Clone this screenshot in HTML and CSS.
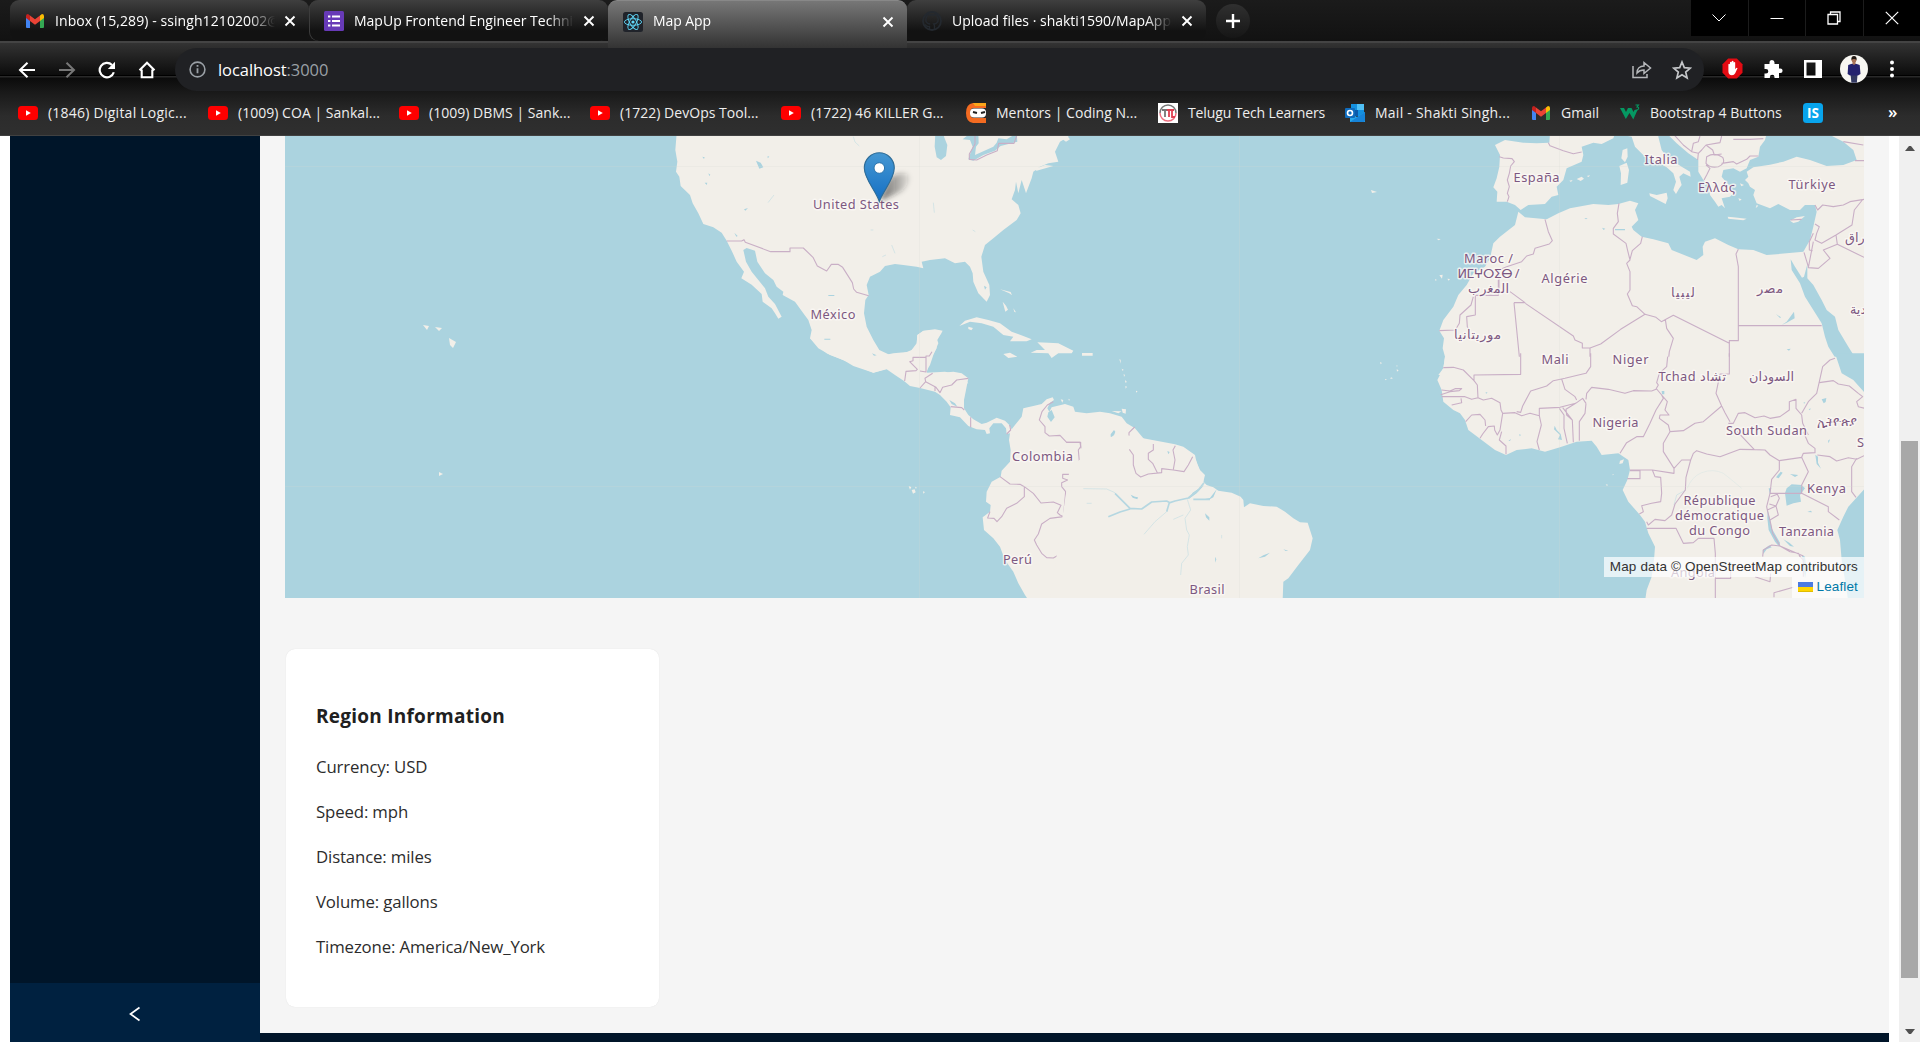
FILE: index.html
```html
<!DOCTYPE html>
<html lang="en">
<head>
<meta charset="utf-8">
<title>Map App</title>
<link rel="stylesheet" href="styles.css">
</head>
<body>
<svg class="defs" width="0" height="0">
  <symbol id="yt" viewBox="0 0 20 20"><rect y="3" width="20" height="14" rx="3.5" fill="#f00"/><path d="M8 7.2v5.6l4.8-2.8z" fill="#fff"/></symbol>
  <symbol id="gmail" viewBox="0 0 20 20"><path d="M1 5.5V16q0 1 1 1h3V9z" fill="#4285f4"/><path d="M19 5.5V16q0 1-1 1h-3V9z" fill="#34a853"/><path d="M15 4.5V10l4-3V5q0-2-2-2z" fill="#fbbc04"/><path d="M5 4.5V10L1 7V5q0-2 2-2z" fill="#c5221f"/><path d="M5 10V4.4l5 3.8 5-3.8V10l-5 3.8z" fill="#ea4335"/></symbol>
  <symbol id="close" viewBox="0 0 12 12"><path d="M1.500 1.500l9 9m0-9l-9 9" stroke="#fff" stroke-width="1.900"/></symbol>
</svg>

<header class="browser">
  <div class="tabstrip">
    <div class="tab">
      <svg class="fav" viewBox="0 0 20 20"><use href="#gmail"/></svg>
      <span class="tab-title wide">Inbox (15,289) - ssingh12102002@</span>
      <svg class="close"><use href="#close"/></svg>
    </div>
    <div class="tab tab-divided">
      <svg class="fav" viewBox="0 0 20 20"><rect width="20" height="20" rx="1.500" fill="#673ab7"/><path d="M4 5.500h2.400m1.600 0h8M4 10h2.400m1.600 0h8M4 14.500h2.400m1.600 0h8" stroke="#fff" stroke-width="2.200"/></svg>
      <span class="tab-title">MapUp Frontend Engineer Techni</span>
      <svg class="close"><use href="#close"/></svg>
    </div>
    <div class="tab tab-active">
      <svg class="fav" viewBox="0 0 20 20"><rect width="20" height="20" rx="2.500" fill="#20232a"/><g fill="none" stroke="#61dafb" stroke-width=".9"><ellipse cx="10" cy="10" rx="8.600" ry="3.300"/><ellipse cx="10" cy="10" rx="8.600" ry="3.300" transform="rotate(60 10 10)"/><ellipse cx="10" cy="10" rx="8.600" ry="3.300" transform="rotate(120 10 10)"/></g><circle cx="10" cy="10" r="1.600" fill="#61dafb"/></svg>
      <span class="tab-title tight">Map App</span>
      <svg class="close"><use href="#close"/></svg>
    </div>
    <div class="tab">
      <svg class="fav" viewBox="0 0 20 20"><path d="M7.500 18.500v-3c-3 .6-3.500-1.400-4.500-2M12.500 18.500V15c0-1-.3-1.500-.7-2 2.500-.3 4.400-1.400 4.400-4.500 0-1.200-.4-2.200-1.200-3 .1-.6.100-1.500-.2-2.500-1 0-2 .7-2.600 1.200a9 9 0 0 0-4.400 0C7.200 3.700 6.200 3 5.200 3c-.3 1-.3 1.900-.2 2.500-.8.8-1.200 1.800-1.200 3 0 3.100 1.900 4.200 4.400 4.500" fill="none" stroke="#24292f" stroke-width="1.400"/><circle cx="10" cy="10" r="9" fill="none" stroke="#24292f" stroke-width="1.800"/></svg>
      <span class="tab-title">Upload files · shakti1590/MapApp</span>
      <svg class="close"><use href="#close"/></svg>
    </div>
    <div class="newtab"><svg width="16" height="16"><path d="M8 1v14M1 8h14" stroke="#fff" stroke-width="2.400"/></svg></div>
    <div class="winbtns">
      <div><svg width="16" height="16"><path d="M1.500 4.500l6.500 6.500 6.500-6.500" fill="none" stroke="#fff"/></svg></div>
      <div><svg width="14" height="14"><path d="M.5 7.500h13" stroke="#fff"/></svg></div>
      <div><svg width="14" height="14"><path d="M1 3.500h9.500v9.500H1zM3.500 3V1H13v9.500h-2" fill="none" stroke="#fff" stroke-width="1.300"/></svg></div>
      <div><svg width="14" height="14"><path d="M.8.8l12.400 12.400m0-12.400L.8 13.200" stroke="#fff" stroke-width="1.200"/></svg></div>
    </div>
  </div>

  <div class="toolbar">
    <div class="nav">
      <svg viewBox="0 0 18 18"><path d="M17 9H2m7.500-7.300L2 9l7.500 7.300" fill="none" stroke="#fff" stroke-width="2"/></svg>
      <svg viewBox="0 0 18 18"><path d="M1 9h15M8.500 1.700L16 9l-7.500 7.300" fill="none" stroke="#777" stroke-width="2"/></svg>
      <svg viewBox="0 0 18 18"><path d="M15.800 11.200A7.200 7.200 0 1 1 14 4" fill="none" stroke="#fff" stroke-width="2.200"/><path d="M17 .8V8H9.800z" fill="#fff"/></svg>
      <svg viewBox="0 0 18 18"><path d="M3.700 8.500v7.700h10.600V8.500M1.500 9.300L9 1.800l7.500 7.500" fill="none" stroke="#fff" stroke-width="2.100"/></svg>
    </div>
    <div class="omnibox">
      <svg width="17" height="17" viewBox="0 0 17 17"><circle cx="8.500" cy="8.500" r="7.400" fill="none" stroke="#9aa0a6" stroke-width="1.600"/><path d="M8.500 7.300v5M8.500 4v1.800" stroke="#9aa0a6" stroke-width="1.800"/></svg>
      <span class="url"><b>localhost</b>:3000</span>
      <svg class="share" width="20" height="20" viewBox="0 0 20 20" fill="none" stroke="#b6b8bb" stroke-width="1.500"><path d="M1 6v11.500h14V14M5 13c0-4.500 3-7 7-7V2.500L18.500 8 12 13.500V10c-3 0-5.200.8-7 3z"/></svg>
      <svg width="20" height="20" viewBox="0 0 20 20"><path d="M10 2l2.300 5.600 6 .5-4.600 3.900 1.400 5.900-5.100-3.200-5.100 3.200L6.300 12 1.700 8.100l6-.5z" fill="none" stroke="#c4c6c9" stroke-width="1.700"/></svg>
    </div>
    <div class="ext">
      <svg width="21" height="21" viewBox="0 0 21 21"><path d="M6.200.5h8.600l5.700 5.700v8.600l-5.700 5.700H6.200L.5 14.800V6.200z" fill="#e30b13"/><path d="M6.400 10V6.200q.9-1 1.600 0V4.300q.9-1 1.700 0v-1q.9-1 1.800 0v1.200q.8-1 1.700 0v6.700l1-1.200q1.200-.6 1.300.3l-2.300 5q-1 2-3.200 2-3.600 0-3.600-4z" fill="#fff"/></svg>
      <svg width="20" height="20" viewBox="0 0 20 20"><path d="M1.500 5h5V3.500a2.500 2.500 0 0 1 5 0V5H16v4.500h1.300a2.300 2.300 0 0 1 0 4.600H16V19h-4.500v-1a2.300 2.300 0 0 0-4.600 0v1H1.500v-4.500H3a2.300 2.300 0 0 0 0-4.600H1.500z" fill="#fff"/></svg>
      <svg width="18" height="18" viewBox="0 0 18 18"><path fill-rule="evenodd" d="M0 0h18v18H0zM2.500 2.500v13H11.500v-13z" fill="#fff"/></svg>
      <svg width="28" height="28" viewBox="0 0 28 28"><circle cx="14" cy="14" r="14" fill="#f8f7f2"/><path d="M10.500 19h7l-.6 8.700h-5.500z" fill="#343a62"/><path d="M8.200 10q5.500-3 11.500 0l.8 9-2.500 1.500H10L7.600 19z" fill="#25236f"/><path d="M12.500 6h3v3l-1.500 1-1.500-1z" fill="#a97458"/><circle cx="14" cy="5.200" r="2.400" fill="#a97458"/><path d="M11.300 5q-.2-4 2.700-4t2.700 4q-2.700-2-5.400 0z" fill="#211913"/></svg>
      <svg width="6" height="18" viewBox="0 0 6 18" fill="#fff"><circle cx="3" cy="2.500" r="2"/><circle cx="3" cy="9" r="2"/><circle cx="3" cy="15.500" r="2"/></svg>
    </div>
  </div>

  <nav class="bookmarks">
    <a class="wide"><svg><use href="#yt"/></svg>(1846) Digital Logic...</a>
    <a><svg><use href="#yt"/></svg>(1009) COA | Sankal...</a>
    <a><svg><use href="#yt"/></svg>(1009) DBMS | Sank...</a>
    <a><svg><use href="#yt"/></svg>(1722) DevOps Tool...</a>
    <a><svg><use href="#yt"/></svg>(1722) 46 KILLER G...</a>
    <a><svg viewBox="0 0 20 20"><path d="M7 0h13v5H8q-4 0-4 5t4 5h12v5H7q-7-1-7-10T7 0z" fill="#f36b21"/><path d="M7 0h13v3H9z" fill="#f9a51a"/><rect x="4" y="5.500" width="16" height="9" rx="4" fill="#fff"/><path d="M7 9l4 1m4 0l4-1" stroke="#222" stroke-width="2"/></svg>Mentors | Coding N...</a>
    <a class="tight"><svg viewBox="0 0 20 20"><path fill="#fff" d="M0 0h20v20H0z"/><path d="M2 10a8 8 0 0 1 16 0" fill="none" stroke="#777" stroke-width="1.500"/><path d="M2 10a8 8 0 0 0 16 0" fill="none" stroke="#ee7080" stroke-width="1.500"/><path d="M4 7h7M7 7v7" stroke="#777" stroke-width="1.800"/><path d="M9 7h7M11 7v7m3-7v7h3" fill="none" stroke="#e04052" stroke-width="1.800"/></svg>Telugu Tech Learners</a>
    <a class="wide"><svg viewBox="0 0 20 20"><path d="M6 1h13v12H6z" fill="#1490df"/><path d="M12 1h7v6h-7z" fill="#50c0f5"/><path d="M6 7h7v6H6z" fill="#0a5bab"/><path d="M5 10l7 4 8-5v10H5z" fill="#28a8ea"/><path d="M5 19l15-10v9l-1 1z" fill="#1683d8"/><rect y="5" width="10" height="10" rx="1" fill="#0f6cbd"/><circle cx="5" cy="10" r="2.500" fill="none" stroke="#fff" stroke-width="1.600"/></svg>Mail - Shakti Singh...</a>
    <a><svg><use href="#gmail"/></svg>Gmail</a>
    <a><svg viewBox="0 0 20 20"><path d="M0 5h4l2 4 2-4h3.500l2 4 1-2h3l-4.200 9.500L9.500 10l-3.700 6z" fill="#059862"/><path d="M15.500 2h3l-1.500 2q2 0 1.600 1.700T15.500 7" fill="none" stroke="#059862" stroke-width="1.100"/></svg>Bootstrap 4 Buttons</a>
    <a><svg viewBox="0 0 20 20"><rect width="20" height="20" rx="3.500" fill="#08a4ec"/><text x="10" y="15.200" text-anchor="middle" class="is">IS</text></svg></a>
    <span class="more">»</span>
  </nav>
</header>

<div class="viewport">
  <aside class="sider">
    <div class="trigger"><svg width="12" height="16" viewBox="0 0 12 16"><path d="M10.500 1.500L1.500 8l9 6.500" fill="none" stroke="#fff" stroke-width="1.700"/></svg></div>
  </aside>
  <main class="layout">
    <div class="content">
      <div class="map">
        <svg class="tiles" viewBox="285 136 1579 462">
          <!-- North America -->
          <g transform="translate(640 130) scale(.33333)">
            <path class="land" d="M110 10L106 60 112 95 108 125 118 140 122 168 150 195 158 220 175 250 190 282 220 292 245 308 260 332 275 362 290 395 312 425 304 445 335 464 365 492 368 515 395 535 405 550 415 566 425 560 405 522 385 500 375 475 355 450 335 425 318 395 310 360 320 354 345 362 352 395 375 430 400 450 410 470 430 485 428 495 465 515 490 550 505 570 515 600 510 625 535 655 570 675 610 690 640 708 700 728 740 716 775 725 805 760H985L960 735 915 725 860 728 870 690 890 655 888 630 905 608 890 600 850 603 832 615 830 640 815 660 795 668 750 675 718 660 700 630 680 590 672 550 676 510 686 495 680 465 690 440 720 425 735 408 765 402 790 405 830 410 850 415 845 395 870 390 915 385 945 400 975 395 990 410 998 430 1000 455 1015 490 1040 515 1050 495 1048 465 1030 425 1024 380 1035 345 1060 325 1090 300 1130 270 1142 250 1135 225 1115 208 1125 180 1128 155 1135 190 1145 150 1155 180 1158 190 1175 145 1180 125 1200 110 1225 100 1255 95 1245 65 1260 35 1285 20V10Z"/>
            <path class="land" d="M958 588L975 572 1010 562 1045 570 1080 580 1115 605 1150 618 1175 628 1160 634 1110 634 1120 620 1090 615 1060 590 1025 580 990 575ZM985 590l14 4-5 7-9-4zM1192 637L1225 638 1255 640 1300 662 1295 670 1255 670 1235 684 1225 670 1172 668 1190 660 1215 660ZM1090 672L1110 668 1132 680 1105 684ZM1088 515l10 12 6 12-8 6zM1120 535l8 12-5-1zM1080 478l32 8 4 10-8-6zM1260 22L1282 18 1290 28 1278 35ZM1182 118L1215 105 1240 108 1190 122Z"/>
            <path class="water" d="M886 10L884 50 890 82 903 90 918 78 922 45 912 20 915 10ZM968 28L990 10H1015L1016 40 1008 50 1005 75 1060 50 1070 38 1075 25 1100 28 1130 10 1132 35 1082 48 1065 62 1030 75 1000 92 985 88 998 50 990 30ZM348 92L362 98 370 112 358 116ZM187 80l7 2-2 5zM194 158h8l-2 7zM205 130l6 4-3 4zM283 308l10 10-4 2zM1032 467l8 5-5 7zM312 238l12-4-8 8zM565 495h18v3h-18zM555 627h15v3h-15zM383 78l5 2-5 5z"/>
            <path class="thinwater" d="M640 20L645 36 658 48M880 218L883 248M384 218L402 195M755 345L765 370M727 380L738 375M692 300h8M998 300l8 5"/>
            <path class="border" d="M260 333H305L312 329 316 337 392 365H450V354H490L519 382 532 408 560 423 574 403H594L608 412 637 458 641 477 650 487 686 497M1005 15V42L988 72V88L1010 90 1040 75 1072 62 1076 40H1122L1130 18"/>
          </g>
          <!-- Central America and the west of South America -->
          <g transform="translate(760 300) scale(.33333)">
            <path class="land" d="M300 100L150 115 200 160 340 218 380 208 405 225 432 243 450 258 480 264 525 275 540 285 560 305 572 322 570 345 600 352 625 378 650 388 675 390 680 402 690 400 688 385 700 370 725 370 738 385 740 402 750 400 747 420 752 450 750 485 725 512 722 530 695 545 680 575 678 605 692 615 690 635 668 652 672 690 700 715 720 740 735 780 760 815 775 850 795 885 805 900H1330V540L1308 480 1295 465 1270 450 1240 436 1165 432 1150 415 1125 385 1100 370 1085 350 1050 340 1020 335 980 340 945 335 940 320 915 312 875 322 868 335 862 325 870 308 882 300 878 292 860 298 845 312 820 318 790 325 785 350 765 375 755 388 748 375 735 362 710 353 680 368 665 372 640 358 625 345 612 325 612 300 618 270 625 235 605 220 580 215 530 220 505 222 498 215 510 195 520 165 535 130 532 120 548 92 525 88 490 92 472 105 470 135 450 155 400 160 375 165 350 150Z"/>
            <path class="land" d="M966 159H998V167H966ZM902 298l8 2-3 8zM925 296l5 3-3 3zM1085 326L1098 328 1097 341 1088 338ZM1055 333L1085 334 1075 340ZM1078 178l4 1v12zM1085 206l6 3-3 4zM1091 222l4 3-3 6zM1095 240l6 6-5 2zM1096 258l5 2-4 6zM1128 272l5 2-5 4zM446 558l8 3-4 8zM455 570l9-2 3 9-8 4zM465 560l5 2-2 5zM489 574l6 2-5 5z"/>
            <path class="water" d="M865 337L875 330 884 352 873 366 862 350ZM1052 403L1062 390 1066 395 1060 412 1052 410ZM568 300L585 310 592 320 575 312ZM1222 455l7-2-2 9zM1113 584L1125 590 1135 592 1132 598 1118 593ZM193 116h18v3h-18zM336 160l14 6-8 1zM1046 745l6 3-5 4z"/>
            <path class="border" d="M516 155L508 168H498V216L480 213M498 172H459V182L449 185 472 208 468 212 438 214 434 243M480 264L497 245 528 262 540 278 548 262 575 255 590 240 625 235M497 245L495 235 518 220M525 262V273M572 320L605 323 613 330M632 352V382M749 375L752 390 740 402M880 305L862 315 846 335 838 360 855 380V398L868 408 900 406 920 427H962V440L955 450 958 485 953 500 968 510 970 530 962 517 955 523H908V535L923 540 905 548V560L917 575 914 610 910 650 900 645 892 638 903 616 880 606 843 609 820 580 793 560 780 553 750 552 720 530M793 560V590L770 610 740 625 725 650 711 665 702 655 683 654 690 635M910 650L870 655 845 672 835 702 823 720 830 735 845 760 860 773 880 774 897 764V796H915L935 828 930 850 928 870 922 892M915 796L942 795 980 770 1006 768V805L1030 826 1085 848 1108 855 1115 880 1110 892M970 530L985 542 1005 540 1030 525 1048 512 1027 507 1028 475 1020 471 1065 472 1102 460 1108 448 1090 433 1107 415V398L1124 381M1108 448L1121 465 1122 495 1132 520 1146 530 1170 520 1205 518V506L1240 510 1275 515 1290 495 1298 470M1180 432V450L1165 460V478L1178 490 1192 518M1246 437L1239 450 1245 480 1240 508"/>
          </g>
          <!-- Brazil and Cape Verde -->
          <g transform="translate(1050 300) scale(.33333)">
            <path class="land" d="M60 500L200 400 375 433 400 440 435 465 440 490 450 510 465 525 460 545 470 555 490 562 505 572 545 578 572 590 580 600 582 622 600 610 640 618 680 620 705 635 730 655 750 667 773 668 780 690 788 715 780 750 745 795 715 835 700 845 698 900H0ZM990 186l6 3-4 4zM1040 208l6 3-5 4zM1023 232l6 3-8 2zM1005 237l6 1-5 3zM1040 195l3 3-3 2z"/>
            <path class="water" d="M242 584L255 590 264 592 262 598 248 593ZM465 640L478 652 478 662 468 652ZM625 775L640 766 660 758 645 770ZM700 748l15 4-8 1zM352 453l7 3-4 7zM495 770l4 8-3 10zM463 555L440 580 415 598 428 578ZM500 568L490 592 475 600 450 600 480 594Z"/>
            <path class="river" d="M195 580L240 625 275 627 305 606 350 603 360 608 375 603 415 594 445 570 462 548M175 650L210 636 240 627M358 608L350 635M430 598H480"/>
            <path class="thinwater" d="M100 566L170 567 195 578M350 635L315 665 282 703M412 598L422 630 405 655 410 690 418 705 412 740 415 765 395 790 392 825M370 658L400 645M515 705v10M110 610h15"/>
            <path class="border" d="M93 445L90 427 50 427M310 432V450L295 460V478L308 490 322 518M376 437L369 450 375 480 370 508M428 470L415 495 402 515 370 510 335 506V518L295 522 272 531 258 520 250 495V465L238 448"/>
          </g>
          <!-- Europe, North Africa and the Middle East -->
          <g transform="translate(1400 130) scale(.33333)">
            <path class="land" d="M450 10L448 38 410 40 370 38 315 30 285 45 300 75 298 110 290 145 280 172 292 185 290 215 320 215 345 225 362 240 385 225 435 222 455 200 475 195 470 170 490 150 500 115 545 95 550 75 545 50 580 38 605 42 640 25 645 10ZM640 10L695 20 705 50 735 80 770 95 800 112 820 130 828 155 820 180 828 192 838 175 845 165 838 140 850 130 872 140 870 125 845 110 800 80 785 60 775 20V10ZM800 10L830 40 865 70 895 90 895 125 910 150 925 165 930 195 945 215 955 230 965 225 975 235 965 205 990 200 1000 190 985 165 965 140 970 120 1000 115 1020 125 1040 115 1050 90 1075 80 1080 50 1095 30 1100 10Z"/>
            <path class="land" d="M1040 125L1060 112 1110 104 1150 95 1190 80 1230 90 1280 108 1330 105 1370 90 1360 60 1330 35 1280 10H1400V735H115L130 715 135 680 128 655 132 625 118 602 130 570 160 530 175 495 200 465 220 430 255 410 270 385 280 340 300 320 345 285 355 245 375 262 440 268 475 250 510 235 580 222 625 225 655 222 690 212 715 220 705 240 715 270 695 290 700 300 725 320 760 328 805 340 815 360 860 378 890 390 910 375 908 350 915 335 945 325 985 345 1015 358 1060 360 1100 375 1160 370 1210 365 1230 330 1240 290 1250 245 1245 225 1215 225 1200 240 1170 240 1135 222 1110 235 1070 220 1060 195 1065 180 1050 170 1045 160 1035 150 1045 140Z"/>
            <path class="land" d="M668 60L682 55 683 80 675 97 664 85ZM658 108L680 98 687 120 682 158 662 165 663 130ZM748 190L770 195 800 188 803 205 797 222 750 198ZM983 260L1000 262 1040 266 1030 271 985 266ZM1170 272L1190 262 1215 258 1195 275 1180 279ZM530 147L545 140 552 146 542 153ZM560 138l10-2-4 5zM508 152l10-2-5 6zM110 326l12 1-6 4zM118 436l10-2-2 12zM142 446l8 1-4 5zM95 428l3 8zM105 447l6 3-5 2zM1015 205l10 3-6 5zM1070 225l5 2-8 8zM1020 160l12 5-8 4z"/>
            <path class="water" d="M1172 388L1185 410 1206 443 1212 440 1222 403 1222 445 1240 465 1265 510 1280 540 1305 560 1315 600 1345 650 1370 690 1405 740H1325L1310 690 1285 650 1275 620 1265 580 1240 540 1215 500 1200 460 1175 420ZM1145 585L1160 575 1182 545 1184 565 1160 578ZM1128 552l15 10-3 2zM645 297h30v4h-30zM606 293l10 3-5 4zM1160 658l12-2-5 6zM553 264l10 1-5 3z"/>
            <path class="border" d="M445 38L450 47 490 62 520 71 545 66M298 80L310 84 336 86 343 95 332 108 328 130 322 150 328 170 322 190 327 200 322 215M820 12L850 45 875 65 880 40 895 35 900 18M875 65L895 70 905 60 918 45 938 60 943 75 965 72M918 45L960 38 965 18M895 70L893 90M920 80Q945 65 968 82 978 100 955 110 930 115 918 100ZM918 105L930 115 920 135 912 150M965 100L1000 95 1010 102 1040 88 1050 78 1075 78M1000 28H1050L1090 26M1330 35L1390 45M1365 92H1392M435 268L445 305 457 332 448 342 405 355 400 372 380 378 365 395 320 410 297 420V480M295 450V496H226M342 518H375L330 485M342 518L362 720M376 520L520 618 525 630 547 640V654L570 654 602 642 662 598 735 553 710 530 697 527 682 492 690 480V425L680 400 690 390 683 362 678 340 640 312V295L655 275 652 250 657 220M727 320L722 340 697 362 690 388M735 553L768 562 784 575 820 556 988 640M570 654V710L556 735M796 568L800 595 820 625 808 665 803 710 775 735M1015 358L1008 372 1015 410V632H988V735M1015 587H1265M226 495V555L200 560 202 590 207 600M220 500L213 525 180 555 178 580 166 600 118 602M1245 225L1253 240 1268 225 1300 230 1330 225 1350 215 1392 208M1387 210L1375 225 1363 240 1356 285 1308 315 1265 340 1245 330 1250 310 1258 290 1245 282M1308 315L1312 343 1392 382M1312 343L1270 360 1290 385 1255 415 1225 413 1240 335M1240 310L1228 335V360L1238 362M1212 367L1225 410M1300 682L1290 690 1268 695V715M130 715L160 712 185 718M1172 270L1205 268"/>
          </g>
          <!-- Sub-Saharan Africa -->
          <g transform="translate(1400 360) scale(.33333)">
            <path class="land" d="M135 -10L130 25 112 60 125 90 130 125 160 150 180 160 195 180 205 210 245 240 285 270 318 285 350 270 395 265 435 275 480 262 530 245 575 242 590 260 605 285 655 280 685 300 690 330 682 360 668 390 685 425 720 465 735 485 745 520 765 560 762 600 755 650 740 690 735 725H1345L1335 660 1325 600 1320 540 1312 510 1330 470 1345 440 1400 380V-10ZM660 302l12-4-4 12-10 2zM617 373l7 1-3 4zM638 342l4 2-4 2z"/>
            <path class="water" d="M1305 -20L1325 40 1360 60 1400 105V-20ZM1160 385L1175 373 1205 375 1215 385 1200 405 1203 425 1180 430 1160 437 1155 400ZM1103 450L1112 485 1115 505 1140 548 1138 560 1125 545 1106 510 1102 475ZM1088 570L1108 556 1115 562 1100 568 1090 582ZM1206 585L1215 590 1220 630 1215 655 1210 620ZM1246 284L1254 290V308L1263 326 1250 312ZM1128 352L1142 335 1148 338 1136 355ZM1170 342l25 3-10 6zM1265 118l14-4-2 12-6 4zM1150 538L1168 548 1182 560 1170 558ZM1284 242l6-4-4 12zM785 93h8v10h-7zM464 197L470 210 482 222 486 240 474 238 480 225 462 208ZM358 222l5 3-4 4zM257 96l6 2-5 3zM1226 148l6-3-2 6zM1210 128l6-2-3 5zM1106 385h8l-4 20zM1222 456l10-4 5 5zM1242 455l3 4zM325 242l8-5-3 6z"/>
            <path class="thinwater faint" d="M862 385Q875 350 905 338 940 325 970 340 990 355 1025 385"/>
            <path class="thinwater" d="M822 435L830 405 858 390"/>
            <path class="border" d="M130 23L160 22 190 30 222 62M362 -20V43L222 45 222 62 232 75 234 113L215 118 195 110H125M125 90L150 93 165 86 185 86 178 92 150 95 122 104M234 113L250 120 275 115 300 128 303 150 308 160 300 210 292 225 284 210 283 198 265 200 248 222 240 235M197 185L215 165 240 163 255 180 257 198M183 115L185 128 155 135M318 283V258L298 240 305 215M308 160L345 158 365 167 390 160 418 167M350 155L362 157 368 138 392 93 440 78 460 62 485 57 495 55 548 42 558 40 572 20V-20M485 57L495 88 525 110 530 120M418 167V145L480 142 527 130 548 115 558 130M418 167L424 195 411 245 418 270M478 145L492 165V205L502 250M488 143L495 152 517 180 520 247M527 130L498 148 500 165 517 180M558 130L555 160 538 185V242M558 118L560 100 575 82 625 88 675 100 700 92 755 93 770 87 785 105 790 115 768 150 750 190 730 230H710L680 248 660 280M768 87L775 75 770 68 778 40 800 20 803 -10M785 105L802 125 795 150 807 165 780 165 778 175 805 195 810 215 790 250V275L822 325V340L757 330 690 330M690 332H720V356H682M757 330L765 350 782 352 785 400 782 425 755 430 725 437 730 455 718 462M822 325L845 300H872L858 352 856 390 825 432 815 465 795 482 765 478 745 495 740 485M872 300L880 280 890 272 920 282 960 290 1020 268 1063 269M810 215L850 212 885 190 910 185 965 138 975 158 990 185M988 -20V42L960 42 948 100 965 138M985 190H1000L1015 160 1035 158 1065 173 1092 168 1110 175 1140 170 1168 150V125L1188 118V145L1205 165 1208 190 1225 225M1012 215L1063 269 1095 270 1110 285 1138 302 1205 292 1210 280 1245 278V265L1225 250 1210 215M1205 160L1225 125 1250 100 1258 65 1268 20 1290 0 1305 -5M1258 68L1300 62 1315 72 1348 78 1375 100 1388 110 1370 125 1375 140 1395 145M1252 285L1290 290 1310 303 1345 293 1370 298 1392 287M1370 295L1355 320V395L1368 412M1205 292L1225 335 1205 375V400L1285 440V455L1318 480M1138 302V330L1115 358 1110 400H1205M1110 400L1100 440 1102 450 1128 438 1135 465 1110 480M1112 410L1132 403 1138 415 1128 438 1108 432M1102 450L1112 490 1118 520 1140 558 1115 555 1090 570 1088 590M1140 558L1170 575 1195 580 1200 590M1200 590L1210 600V650M1140 558L1168 570 1210 588M740 505H828L850 550 880 548 895 535H942L946 580V655H992V610M946 655V720M1065 650L1110 665 1112 640M1122 712V698L1180 682"/>
          </g>
          <!-- Hawaii, Kiribati and Bermuda -->
          <path class="land" d="M423 325l6 1-2 4zM435 327l7 1-3 3zM441 332l3 2zM449 338l7 4-3 6-3-3zM439 472l4 2-4 2zM1356 185l5 1zM1371 190l6 2-5 1z"/>
          <path class="seam" d="M285 166.500H1864M285 486.500H1864M919.500 136V598M1239.500 136V598M1559.500 136V598"/>
          <g class="labels">
            <text x="813" y="209" textLength="86">United States</text>
            <text x="810.500" y="318.500" textLength="45">México</text>
            <text x="1012" y="461" textLength="61">Colombia</text>
            <text x="1003" y="563.500" textLength="29">Perú</text>
            <text x="1189.500" y="593.500" textLength="35">Brasil</text>
            <text x="1513.500" y="181.500" textLength="46">España</text>
            <text x="1644.500" y="164" textLength="33">Italia</text>
            <text x="1698" y="191.500" textLength="37">Ελλάς</text>
            <text x="1788.500" y="189" textLength="47">Türkiye</text>
            <text x="1464" y="263" textLength="49">Maroc /</text>
            <text x="1457.500" y="278" textLength="62">ⵍⵎⵖⵔⵉⴱ /</text>
            <text x="1468" y="293" textLength="41">المغرب</text>
            <text x="1541.500" y="282.500" textLength="46">Algérie</text>
            <text x="1671" y="297" textLength="24">ليبيا</text>
            <text x="1757" y="292.500" textLength="26">مصر</text>
            <text x="1845" y="242">راق</text>
            <text x="1850" y="314">دية</text>
            <text x="1454" y="339" textLength="47">موريتانيا</text>
            <text x="1541.500" y="364" textLength="27">Mali</text>
            <text x="1612.500" y="364" textLength="36">Niger</text>
            <text x="1658.500" y="380.500" textLength="37">Tchad</text>
            <text x="1700" y="380.500" textLength="26">تشاد</text>
            <text x="1749" y="380.500" textLength="45">السودان</text>
            <text x="1592.500" y="427" textLength="46">Nigeria</text>
            <text x="1726" y="435" textLength="81">South Sudan</text>
            <text x="1817" y="426" textLength="40">ኢትዮጵያ</text>
            <text x="1857" y="447">S</text>
            <text x="1807" y="492.500" textLength="39">Kenya</text>
            <text x="1683.500" y="505" textLength="72">République</text>
            <text x="1675" y="520" textLength="89">démocratique</text>
            <text x="1689" y="535" textLength="61">du Congo</text>
            <text x="1779" y="536" textLength="55">Tanzania</text>
            <text x="1671" y="577" textLength="44">Angola</text>
          </g>
          <defs>
            <linearGradient id="pin" x1="0" y1="0" x2="0" y2="1"><stop offset="0" stop-color="#4597d2"/><stop offset="1" stop-color="#146fc4"/></linearGradient>
            <linearGradient id="shade" x1="0" y1="0" x2="1" y2="0"><stop offset="0" stop-color="#222" stop-opacity=".65"/><stop offset="1" stop-color="#222" stop-opacity=".1"/></linearGradient>
            <filter id="soft" x="-50%" y="-50%" width="200%" height="200%"><feGaussianBlur stdDeviation="2.400"/></filter>
          </defs>
          <path d="M880 201L888 180Q897 171 907 174 913 180 902 191Z" fill="url(#shade)" filter="url(#soft)"/>
          <path d="M879.300 201.500C876 191 864.300 179 864.300 168a15 15.200 0 0 1 30 0C894.300 179 883 191 879.300 201.500Z" fill="url(#pin)" stroke="#2e6c97" stroke-width="1.100"/>
          <circle cx="879.300" cy="168" r="5.300" fill="#fff" stroke="#2c73ab"/>
        </svg>
        <div class="attribution">
          <div>Map data © OpenStreetMap contributors</div>
          <div><svg width="15" height="10"><path fill="#4c7be1" d="M0 0h15v5H0z"/><path fill="#ffd500" d="M0 5h15v5H0z"/><path fill="#e0bc00" d="M0 9h15v1H0z"/></svg><a>Leaflet</a></div>
        </div>
      </div>
      <section class="card">
        <h3>Region Information</h3>
        <p>Currency: USD</p>
        <p>Speed: mph</p>
        <p>Distance: miles</p>
        <p>Volume: gallons</p>
        <p>Timezone: America/New_York</p>
      </section>
    </div>
  </main>
  <div class="scrollbar">
    <svg width="10" height="6"><path d="M0 6l4-5h2l4 5z" fill="#505050"/></svg>
    <div class="thumb"></div>
    <svg width="10" height="6"><path d="M0 0l4 5h2l4-5z" fill="#505050"/></svg>
  </div>
</div>
</body>
</html>
```
FILE: styles.css
```css
* { box-sizing: border-box; }
body {
  margin: 0;
  height: 1042px;
  display: flex;
  flex-direction: column;
  overflow: hidden;
  background: #fff;
  font-family: "Open Sans", "Noto Sans", sans-serif;
}
svg { display: block; flex: none; }
.defs { position: absolute; }

/* browser chrome */
.browser {
  height: 136px;
  color: #fff;
  background: linear-gradient(#1b1b1b 0, #121212 41px, #444 41px, #444 43px, #333 43px, #0c0c0c 75px, #000 75px, #000 76px, #292929 76px, #292929 77px, #0b0b0b 78px, #191919 92px, #2c2c2c 116px, #2f2f2f 135px, #414141 135px);
}
.tabstrip { height: 43px; padding-left: 10px; display: flex; }
.tab {
  width: 299px;
  height: 41px;
  padding: 1px 13px 0 15px;
  display: flex;
  align-items: center;
  border-radius: 9px;
  background: linear-gradient(#3f3f3f, #121212 75%);
}
.tab-divided { box-shadow: inset 1px 0 #3c3c3c; }
.tab-active {
  height: 48px;
  padding-bottom: 7px;
  border-radius: 9px 9px 0 0;
  background: linear-gradient(#777, #333);
  border-top: 1px solid #888;
}
.fav { width: 20px; height: 20px; }
.tab-title {
  flex: 1;
  margin: -2px 9px 0 10px;
  overflow: hidden;
  white-space: nowrap;
  font-size: 14px;
  letter-spacing: 0;
  -webkit-mask-image: linear-gradient(90deg, #000 88%, transparent);
  mask-image: linear-gradient(90deg, #000 88%, transparent);
}
.tab-title.wide { letter-spacing: .08px; }
.tab-title.tight { letter-spacing: -.1px; }
.close { width: 12px; height: 12px; }
.newtab {
  width: 34px;
  height: 34px;
  margin: 4px 0 0 10px;
  border-radius: 50%;
  display: grid;
  place-items: center;
  background: linear-gradient(#303030, #161616);
}
.winbtns { margin-left: auto; width: 229px; height: 36px; display: flex; gap: 1px; background: #1c1c1c; }
.winbtns div { flex: 1; background: #000; display: grid; place-items: center; }
.toolbar { height: 48px; padding-top: 5px; display: flex; }
.nav { width: 175px; height: 43px; padding-left: 18px; display: flex; align-items: center; gap: 22px; }
.nav svg { width: 18px; height: 18px; }
.omnibox {
  width: 1529px;
  height: 43px;
  padding: 0 12px 0 14px;
  border-radius: 22px;
  background: #202124;
  display: flex;
  align-items: center;
}
.url { flex: 1; margin: -1px 0 0 12px; font-size: 16.500px; letter-spacing: -.06px; color: #9aa0a6; }
.url b { font-weight: 400; color: #fff; }
.share { margin-right: 20px; }
.ext { flex: 1; height: 43px; padding: 0 25px 2px 18px; display: flex; align-items: center; justify-content: space-between; }
.ext svg:nth-child(4) { margin: 0 1px 0 -2px; }
.bookmarks {
  height: 43px;
  padding-left: 18px;
  display: grid;
  grid-template-columns: 190px 191px 191px 191px 185px 192px 187px 186px 89px 183px 85px 1fr;
  align-items: center;
}
.bookmarks a { display: flex; align-items: center; gap: 10px; white-space: nowrap; font-size: 14px; line-height: 19px; letter-spacing: .03px; color: #eee; }
.bookmarks .wide { letter-spacing: .24px; }
.bookmarks .tight { letter-spacing: -.12px; }
.bookmarks svg { width: 20px; height: 20px; }
.is { font: 700 13.500px "Open Sans", sans-serif; fill: #fff; letter-spacing: 0; }
.more { font-size: 17px; font-weight: 600; line-height: 20px; margin-top: -2px; }

/* page */
.viewport { flex: 1; display: flex; padding-left: 10px; }
.sider { width: 250px; background: #001529; display: flex; flex-direction: column; justify-content: flex-end; }
.trigger { height: 59px; padding-top: 2px; background: #002140; display: grid; place-items: center; }
.layout { width: 1629px; margin-right: 10px; background: #001529; }
.content { height: 897px; padding: 0 25px; background: #f5f5f5; }
.map { position: relative; height: 462px; background: #abd3df; overflow: hidden; }
.tiles { width: 100%; height: 462px; }
.land { fill: #f2efe9; }
.water { fill: #abd3df; }
.river { fill: none; stroke: #b5d7e1; stroke-width: 5; stroke-linejoin: round; }
.thinwater { fill: none; stroke: #cfe2e4; stroke-width: 2.500; }
.faint { stroke: #e2e9e6; }
.border { fill: none; stroke: #c9afc6; stroke-width: 3.300; stroke-linejoin: round; }
.seam { fill: none; stroke: #d8dcd0; stroke-opacity: .22; }
.labels text {
  font: 400 12.800px "Noto Sans", "DejaVu Sans", sans-serif;
  fill: #7d5881;
  stroke: #fbf8f5;
  stroke-opacity: .8;
  stroke-width: 3px;
  stroke-linejoin: round;
  paint-order: stroke;
}
.attribution {
  position: absolute;
  right: 0;
  bottom: 0;
  display: flex;
  flex-direction: column;
  align-items: flex-end;
  font: 13.500px/18px "Liberation Sans", Arial, sans-serif;
  letter-spacing: .13px;
  color: #333;
}
.attribution div { height: 20px; padding: 0 6px 1px; display: flex; align-items: center; gap: 4px; background: rgba(255, 255, 255, .7); }
.attribution div + div { height: 21px; padding-bottom: 2px; }
.attribution a { color: #0078a8; }
.card {
  width: 373px;
  height: 358px;
  margin: 51px 0 0 1px;
  padding: 52px 30px 0;
  border-radius: 9px;
  background: #fff;
  box-shadow: 0 0 1px rgba(0, 0, 0, .12);
  color: #202020;
}
.card h3 { margin: 0 0 22px; font-size: 19px; line-height: 30px; font-weight: 700; letter-spacing: .25px; }
.card p { margin: 0 0 18px; font-size: 16.800px; line-height: 27px; letter-spacing: -.14px; color: #2c2c2c; }
.scrollbar { width: 21px; padding: 9px 0 7px; background: #f0f0f0; display: flex; flex-direction: column; align-items: center; }
.thumb { width: 17px; height: 537px; margin: 290px 0 auto; background: #a8a8a8; }
```
